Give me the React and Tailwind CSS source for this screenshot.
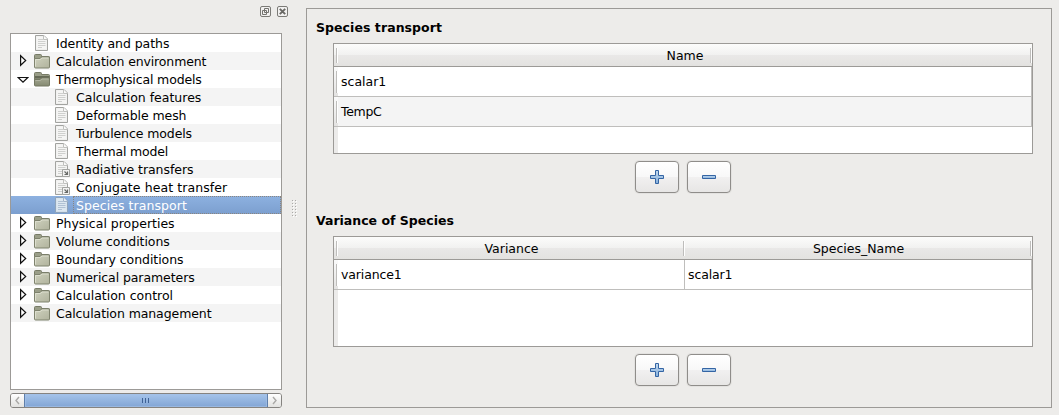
import React from "react";

function DocIcon({ link, selected }) {
  const top = selected ? "#e4ecf4" : "#fafaf9";
  const line = selected ? "#b0c1d4" : "#cfd0ce";
  return (
    <svg width="16" height="16" viewBox="0 0 16 16" className="block shrink-0">
      <path d="M1.5.5h8.500l3.500 3.500v11.500h-12z" fill={selected ? "#d3dfeb" : "#efefed"} stroke={selected ? "#8fa4bb" : "#a2a3a0"} />
      <path d="M2.500 1.500h7v3.500h3v9h-10z" fill={top} opacity=".55" />
      <path d="M9.500.5v4h4" fill={top} stroke={selected ? "#a3b5c9" : "#c0c1be"} />
      <path d="M4 4.500h5M4 6.500h7.500M4 8.500h7.500M4 10.500h7.500M4 12.500h4" stroke={line} />
      {link && (
        <g>
          <path d="M8.500 8.500h7v7h-7z" fill="#f3f3f2" stroke="#a3a4a1" />
          <path d="M10.500 10.500l3 3M13.500 10.500v3h-3" fill="none" stroke="#686a67" strokeWidth="1.2" />
        </g>
      )}
    </svg>
  );
}

function FolderIcon({ open }) {
  return (
    <svg width="16" height="16" viewBox="0 0 16 16" className="block shrink-0">
      <defs>
        <linearGradient id="folderFront" x1="0" y1="0" x2="1" y2="1">
          <stop offset="0" stopColor="#cfd1be" />
          <stop offset="1" stopColor="#b0b39d" />
        </linearGradient>
        <linearGradient id="folderOpen" x1="0" y1="0" x2="0" y2="1">
          <stop offset="0" stopColor="#a3a690" />
          <stop offset="1" stopColor="#858a72" />
        </linearGradient>
      </defs>
      <path d="M.5 13.500v-11q0-1 1-1h5q1 0 1 1v1h7q1 0 1 1v9z" fill="#9a9e88" stroke="#777b66" />
      {open ? (
        <g>
          <path d="M1 5h14v2.500h-14z" fill="#666a57" />
          <path d="M.5 14v-5.500h5.500l1.500-1.500h8v7q0 1-1 1h-13q-1 0-1-1z" fill="url(#folderOpen)" stroke="#747863" />
          <path d="M1.500 9.500h5l1.500-1.500h6.500" fill="none" stroke="#b2b5a2" />
        </g>
      ) : (
        <g>
          <path d="M.5 14v-8.500h5.500l1.500-1.500h8v10q0 1-1 1h-13q-1 0-1-1z" fill="url(#folderFront)" stroke="#7f836e" />
          <path d="M1.500 13.500v-7h5l1.500-1.500h6.500" fill="none" stroke="#dcdece" />
        </g>
      )}
    </svg>
  );
}

function Expander({ open }) {
  return (
    <svg width="12" height="18" viewBox="0 0 12 18" className="block shrink-0">
      {open ? (
        <path d="M1.200 7.500h9.600L6 12.200z" fill="#fff" stroke="#111" strokeWidth="1.200" />
      ) : (
        <path d="M3.600 3.700v9.600L8.700 8.500z" fill="#fff" stroke="#111" strokeWidth="1.200" />
      )}
    </svg>
  );
}

const tree = [
  { label: "Identity and paths", kind: "doc", tracking: "tracking-[-0.05px]" },
  { label: "Calculation environment", kind: "folder", tracking: "tracking-[-0.13px]" },
  { label: "Thermophysical models", kind: "open", tracking: "tracking-[-0.14px]" },
  { label: "Calculation features", kind: "doc", child: true },
  { label: "Deformable mesh", kind: "doc", child: true, tracking: "tracking-[-0.07px]" },
  { label: "Turbulence models", kind: "doc", child: true, tracking: "tracking-[-0.1px]" },
  { label: "Thermal model", kind: "doc", child: true, tracking: "tracking-[-0.17px]" },
  { label: "Radiative transfers", kind: "link", child: true, tracking: "tracking-[-0.05px]" },
  { label: "Conjugate heat transfer", kind: "link", child: true, tracking: "tracking-[0.08px]" },
  { label: "Species transport", kind: "doc", child: true, selected: true, tracking: "tracking-[0.06px]" },
  { label: "Physical properties", kind: "folder" },
  { label: "Volume conditions", kind: "folder", tracking: "tracking-[-0.06px]" },
  { label: "Boundary conditions", kind: "folder", tracking: "tracking-[-0.05px]" },
  { label: "Numerical parameters", kind: "folder", tracking: "tracking-[-0.08px]" },
  { label: "Calculation control", kind: "folder" },
  { label: "Calculation management", kind: "folder", tracking: "tracking-[-0.09px]" },
];

function TreeRow({ item, index }) {
  const isFolder = item.kind === "folder" || item.kind === "open";
  const bg = item.selected
    ? "bg-linear-to-b from-[#8db1e0] to-[#7c9fcf] text-white"
    : index % 2
      ? "bg-[#f4f4f4]"
      : "bg-white";
  return (
    <div className={`flex h-[18px] items-center pl-[6px] ${bg}`}>
      <div className="w-3 shrink-0">{isFolder && <Expander open={item.kind === "open"} />}</div>
      <div className={item.child ? "ml-[25px]" : "ml-[5px]"}>
        {isFolder ? <FolderIcon open={item.kind === "open"} /> : <DocIcon link={item.kind === "link"} selected={item.selected} />}
      </div>
      <div
        className={`ml-[3px] flex h-[18px] flex-1 items-center whitespace-nowrap border border-dotted pl-[2px] pt-[2px] ${
          item.tracking ?? ""
        } ${item.selected ? "border-[#8a8580]" : "border-transparent"}`}
      >
        {item.label}
      </div>
    </div>
  );
}

function ScrollButton({ right }) {
  return (
    <div className="flex w-[13px] items-center justify-center bg-linear-to-b from-white to-[#e2e2e0]">
      <svg width="7" height="9" viewBox="0 0 7 9">
        <path d={right ? "M2 1l3 3.500L2 8" : "M5 1L2 4.500 5 8"} fill="none" stroke="#aaa9a7" strokeWidth="1.400" />
      </svg>
    </div>
  );
}

function ScrollBar() {
  return (
    <div className="mt-[3px] flex h-[15px] overflow-hidden rounded-[3px] border border-[#858380]">
      <ScrollButton />
      <div className="-my-px flex flex-1 items-center justify-center gap-[2px] border border-[#5f7fab] bg-linear-to-b from-[#a5c4ea] to-[#82a5d5] pr-[2px] shadow-[inset_0_0_0_1px_#a3c0e6aa]">
        <span className="h-[5px] w-px bg-[#3f6296]" />
        <span className="h-[5px] w-px bg-[#3f6296]" />
        <span className="h-[5px] w-px bg-[#3f6296]" />
      </div>
      <ScrollButton right />
    </div>
  );
}

function DockButtons() {
  return (
    <div className="flex h-[33px] justify-end gap-[6px] pt-[6px]">
      <svg width="11" height="11" viewBox="0 0 11 11" className="block">
        <rect x=".5" y=".5" width="10" height="10" rx="1.500" fill="#f2f1f0" stroke="#7b7a76" />
        <path d="M4.500 2.500h4v4h-4zM2.500 4.500h4v4h-4z" fill="#f2f1f0" stroke="#74736f" />
      </svg>
      <svg width="11" height="11" viewBox="0 0 11 11" className="block">
        <rect x=".5" y=".5" width="10" height="10" rx="1.500" fill="#f2f1f0" stroke="#7b7a76" />
        <path d="M2.800 2.800l5.400 5.400M8.200 2.800L2.800 8.200" stroke="#696864" strokeWidth="1.900" />
      </svg>
    </div>
  );
}

function Grip() {
  return (
    <svg width="6" height="18" viewBox="0 0 6 18" className="block">
      {[0, 3, 6, 9, 12, 15].map((y) => (
        <g key={y}>
          <path d={`M1 ${y + 1}h1v1h-1zM4 ${y + 1}h1v1h-1z`} fill="#fff" />
          <path d={`M0 ${y}h1v1h-1zM3 ${y}h1v1h-1z`} fill="#aaa9a7" />
        </g>
      ))}
    </svg>
  );
}

function Notch({ tall }) {
  return (
    <span
      className={`block w-[2px] shrink-0 border-l border-[#bebdbb] bg-white ${tall ? "h-[22px]" : "h-[15px]"}`}
    />
  );
}

function DataTable({ columns, rows }) {
  const split = columns.length > 1;
  return (
    <div className="ml-[17px] flex h-[111px] w-[700px] flex-col border border-[#9c9a97] bg-white">
      <div className="flex h-[23px] shrink-0 border-b border-[#9c9a97] bg-[linear-gradient(#fcfcfb_0,#f1f1f0_50%,#e9e8e7_52%,#e3e2e0_100%)] pl-[2px]">
        <div className="flex w-[2px] items-center">
          <Notch />
        </div>
        {columns.map((name, i) => (
          <div key={name} className={`flex items-center ${split && i === 0 ? "w-[347px]" : "flex-1"}`}>
            <div className="flex-1 pl-[2px] pt-px text-center">{name}</div>
            <Notch />
          </div>
        ))}
      </div>
      {rows.map((cells, r) => (
        <div key={cells[0]} className={`flex h-[30px] shrink-0 border-b border-[#bfbebc] ${r % 2 ? "bg-[#f4f4f4]" : "bg-white"}`}>
          <div className="flex w-[4px] items-center bg-linear-to-b from-[#fafafa] to-[#e4e3e2] pl-[2px]">
            <Notch tall />
          </div>
          {cells.map((text, i) => (
            <div
              key={text}
              className={`flex items-center border-r border-[#bfbebc] pl-[3px] ${split ? "tracking-[-0.12px]" : ""} ${
                text === "TempC" ? "tracking-[-0.3px]" : ""
              } ${split && i === 0 ? "w-[347px]" : "flex-1"}`}
            >
              {text}
            </div>
          ))}
        </div>
      ))}
      <div className="w-[4px] flex-1 bg-[#ecebea]" />
    </div>
  );
}

function ActionButton({ minus }) {
  return (
    <button className="flex h-8 w-11 items-center justify-center rounded-[4px] border border-[#8f8d8a] bg-[linear-gradient(#ffffff_0,#f8f8f8_49%,#f1f0f0_51%,#e7e6e5_100%)] shadow-[0_0_0_1px_#e3e2e0]">
      <svg width="14" height="14" viewBox="0 0 14 14" className="block">
        <defs>
          <linearGradient id="glyph" x1="0" y1="0" x2="0" y2="1">
            <stop offset="0" stopColor="#c3d9ee" />
            <stop offset="1" stopColor="#86b0dc" />
          </linearGradient>
        </defs>
        <path
          d={minus ? "M.5 5.500h13v3H.5z" : "M5.500.5h3v5h5v3h-5v5h-3v-5h-5v-3h5z"}
          fill="url(#glyph)"
          stroke="#3465a4"
          strokeLinejoin="round"
        />
      </svg>
    </button>
  );
}

function ActionButtons() {
  return (
    <div className="mt-[7px] flex h-8 gap-2 pl-[319px]">
      <ActionButton />
      <ActionButton minus />
    </div>
  );
}

export default function App() {
  return (
    <div className="flex h-[415px] w-[1059px] overflow-hidden bg-[#edecea] pl-[10px] font-['DejaVu_Sans',sans-serif] text-[12.5px] leading-[18px] text-black">
      <aside className="w-[272px]">
        <div className="-mr-[6px]">
          <DockButtons />
        </div>
        <div className="h-[357px] border border-[#9c9a97] bg-white">
          {tree.map((item, i) => (
            <TreeRow key={item.label} item={item} index={i} />
          ))}
        </div>
        <ScrollBar />
      </aside>
      <div className="w-6 pl-[10px] pt-[200px]">
        <Grip />
      </div>
      <main className="mt-2 h-[400px] w-[746px] border border-[#9c9a97] pl-[9px]">
        <h2 className="h-[34px] pt-[10px] font-bold tracking-[0.06px]">Species transport</h2>
        <DataTable columns={["Name"]} rows={[["scalar1"], ["TempC"]]} />
        <ActionButtons />
        <h2 className="h-[43px] pt-[19px] font-bold">Variance of Species</h2>
        <DataTable columns={["Variance", "Species_Name"]} rows={[["variance1", "scalar1"]]} />
        <ActionButtons />
      </main>
    </div>
  );
}
